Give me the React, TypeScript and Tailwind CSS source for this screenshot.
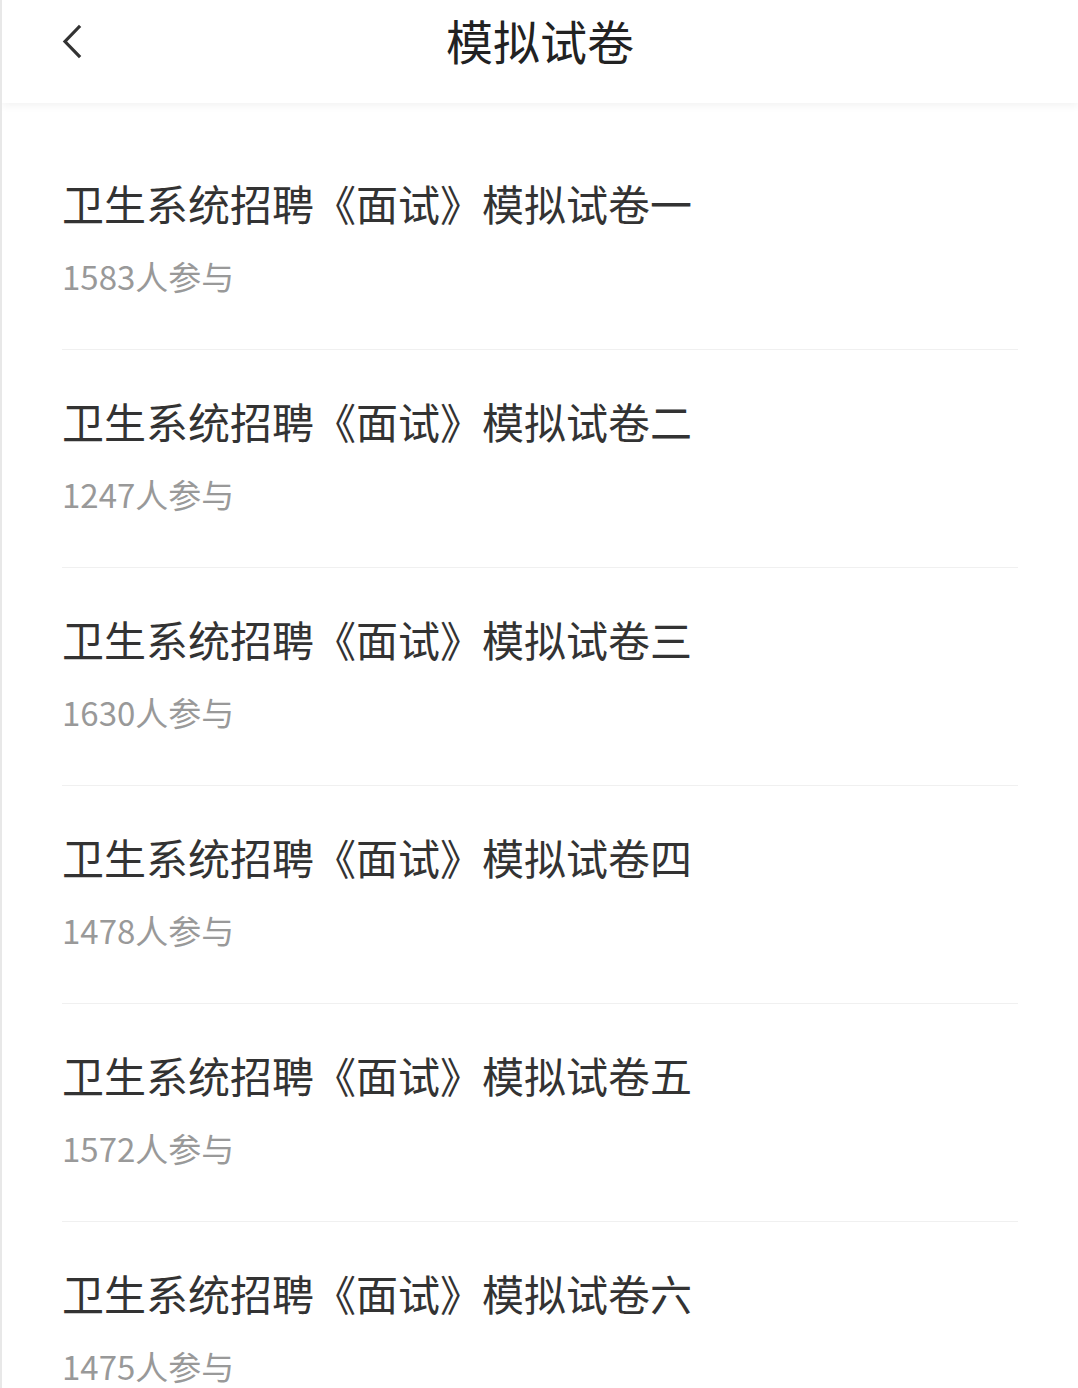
import * as React from 'react'

const papers = [
  { suffix: '一', count: 1583 },
  { suffix: '二', count: 1247 },
  { suffix: '三', count: 1630 },
  { suffix: '四', count: 1478 },
  { suffix: '五', count: 1572 },
  { suffix: '六', count: 1475 },
]

function BackIcon() {
  return (
    <svg width="24" height="36" viewBox="0 0 24 36" fill="none">
      <path d="M19 3 L5 17.5 L19 32" stroke="#333" strokeWidth="3.2" strokeLinecap="square" />
    </svg>
  )
}

export default function App() {
  return (
    <div
      className="min-h-[1388px] w-[1078px] overflow-hidden border-l-2 border-[#e8e8e8] bg-white"
      style={{ fontFamily: '"Noto Sans CJK SC", "Noto Sans", sans-serif' }}
    >
      <header className="relative flex h-[103px] items-center justify-center bg-white shadow-[0_3px_8px_rgba(0,0,0,0.05)]">
        <button className="absolute left-[58px] top-[24px]">
          <BackIcon />
        </button>
        <h1 className="-mt-[24px] text-[47px] leading-none text-[#222]">模拟试卷</h1>
      </header>

      <ul className="pt-[29px]">
        {papers.map((p) => (
          <li key={p.suffix} className="ml-[60px] mr-[60px] border-b border-[#f0f0f0] pb-[57px] pt-[50px]">
            <p className="text-[42px] leading-[42px] text-[#333]">卫生系统招聘《面试》模拟试卷{p.suffix}</p>
            <p className="mt-[36px] text-[33px] leading-[32px] text-[#999]">{p.count}人参与</p>
          </li>
        ))}
      </ul>
    </div>
  )
}
